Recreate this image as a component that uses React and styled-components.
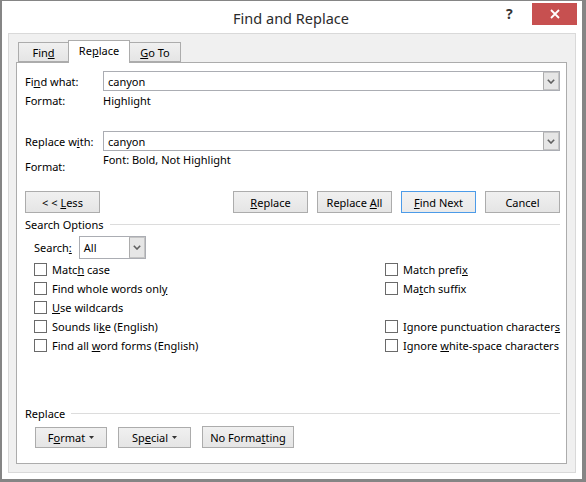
import React from "react";
import styled, { createGlobalStyle } from "styled-components";

const GlobalStyle = createGlobalStyle`
  html, body {
    margin: 0;
    padding: 0;
    background: #ffffff;
  }
  body {
    font-family: "Noto Sans", "Open Sans", sans-serif;
    font-size: 11px;
    color: #000;
  }
`;

const Window = styled.div`
  width: 586px;
  height: 482px;
  box-sizing: border-box;
  border-style: solid;
  border-color: #858585;
  border-width: 1px 4px 3px 2px;
  background: #ffffff;
  display: flex;
  flex-direction: column;
`;

const TitleBar = styled.div`
  height: 32px;
  flex-shrink: 0;
  display: grid;
  grid-template-columns: 1fr auto 1fr;
  align-items: start;
`;

const Title = styled.div`
  grid-column: 2;
  font-size: 14.5px;
  line-height: 34px;
  color: #2b2b2b;
  padding-right: 2px;
`;

const TitleControls = styled.div`
  grid-column: 3;
  justify-self: end;
  display: flex;
  align-items: center;
  margin-right: 5px;
`;

const Help = styled.span`
  font-size: 14px;
  font-weight: bold;
  color: #333;
  width: 20px;
  margin-right: 6px;
  line-height: 26px;
`;

const CloseButton = styled.div`
  width: 45px;
  height: 22px;
  background: #c75050;
  display: flex;
  align-items: center;
  justify-content: center;
`;

const Body = styled.div`
  flex: 1;
  margin: 0 6px 6px 6px;
  background: #f0f0f0;
  border: 1px solid #d9d9d9;
  padding: 6px 8px 8px 7px;
  display: flex;
  flex-direction: column;
`;

const TabRow = styled.div`
  display: flex;
  align-items: flex-end;
  margin-left: 2px;
  height: 22px;
  position: relative;
  z-index: 1;
`;

const Tab = styled.div`
  box-sizing: border-box;
  width: ${(p) => p.$width}px;
  height: ${(p) => (p.$active ? 23 : 20)}px;
  margin-bottom: ${(p) => (p.$active ? -1 : 0)}px;
  border: 1px solid #acacac;
  border-bottom: ${(p) => (p.$active ? "none" : "1px solid #acacac")};
  margin-left: ${(p) => (p.$first ? 0 : -1)}px;
  background: ${(p) =>
    p.$active ? "#ffffff" : "linear-gradient(#f0f0f0, #e5e5e5)"};
  display: flex;
  align-items: center;
  justify-content: center;
  padding-bottom: ${(p) => (p.$active ? 3 : 0)}px;
  font-size: 11px;
`;

const Panel = styled.div`
  flex: 1;
  background: #ffffff;
  border: 1px solid #acacac;
  padding: 8px 6px 0 8px;
  display: flex;
  flex-direction: column;
`;

const Key = styled.u`
  text-decoration: underline;
  text-underline-offset: 1px;
`;

const FieldRow = styled.div`
  display: flex;
  align-items: center;
  height: 20px;
  margin-top: ${(p) => p.$top || 0}px;
`;

const Label = styled.div`
  width: 78px;
  flex-shrink: 0;
  margin-top: ${(p) => p.$offset || 0}px;
`;

const Combo = styled.div`
  box-sizing: border-box;
  height: ${(p) => p.$height || 20}px;
  width: ${(p) => (p.$width ? p.$width + "px" : "auto")};
  flex: ${(p) => (p.$width ? "none" : 1)};
  border: 1px solid #abadb3;
  display: flex;
  align-items: stretch;
  background: #fff;
`;

const ComboText = styled.div`
  flex: 1;
  padding-left: 4px;
  display: flex;
  align-items: center;
`;

const ComboButton = styled.div`
  width: 16px;
  box-sizing: border-box;
  background: #e6e6e6;
  border: 1px solid #c5c5c5;
  border-left-color: #acacac;
  display: flex;
  align-items: center;
  justify-content: center;
`;

const FormatRow = styled.div`
  display: flex;
  align-items: flex-start;
  margin-top: ${(p) => p.$top || 0}px;
  line-height: 16px;
`;

const ButtonRow = styled.div`
  display: flex;
  align-items: center;
  gap: ${(p) => p.$gap || 9}px;
  margin-top: ${(p) => p.$top || 0}px;
  padding-left: ${(p) => p.$indent || 0}px;
`;

const Button = styled.button`
  font: inherit;
  color: #000;
  box-sizing: border-box;
  width: ${(p) => p.$width}px;
  height: ${(p) => p.$height || 22}px;
  margin-right: ${(p) => (p.$push ? "auto" : "0")};
  border: 1px solid ${(p) => (p.$primary ? "#4c9be8" : "#acacac")};
  background: ${(p) =>
    p.$primary
      ? "linear-gradient(#f2f2f2, #eaeaea)"
      : "linear-gradient(#f0f0f0, #e5e5e5)"};
  padding: 0;
  display: flex;
  align-items: center;
  justify-content: center;
  gap: 4px;
  white-space: nowrap;
`;

const GroupHeader = styled.div`
  display: flex;
  align-items: center;
  height: 16px;
  margin-top: ${(p) => p.$top || 0}px;

  &::after {
    content: "";
    flex: 1;
    height: 1px;
    background: #dcdcdc;
    margin-left: 6px;
  }
`;

const SearchRow = styled.div`
  display: flex;
  align-items: center;
  margin-top: 4px;
  padding-left: 9px;
  gap: 7px;
`;

const OptionGrid = styled.div`
  display: grid;
  grid-template-columns: 351px 1fr;
  grid-auto-rows: 19px;
  margin-top: 1px;
  padding-left: 9px;
`;

const Option = styled.div`
  display: flex;
  align-items: center;
  gap: 5px;
  white-space: nowrap;
  grid-column: ${(p) => p.$col};
  grid-row: ${(p) => p.$row};
`;

const Box = styled.span`
  width: 13px;
  height: 13px;
  box-sizing: border-box;
  border: 1px solid #6a6a6a;
  background: #fff;
  flex-shrink: 0;
`;

const Caret = () => (
  <svg width="5" height="3" viewBox="0 0 5 3">
    <path d="M0 0 L2.5 3 L5 0 Z" fill="#333" />
  </svg>
);

const Chevron = () => (
  <svg width="8" height="5" viewBox="0 0 8 5">
    <path
      d="M0.8 0.8 L4 4 L7.2 0.8"
      fill="none"
      stroke="#606060"
      strokeWidth="1.6"
    />
  </svg>
);

const CloseIcon = () => (
  <svg width="10" height="10" viewBox="0 0 10 10">
    <path d="M1 1 L9 9 M9 1 L1 9" stroke="#fff" strokeWidth="1.8" />
  </svg>
);

const options = [
  { col: 1, row: 1, label: <>Matc<Key>h</Key> case</> },
  { col: 1, row: 2, label: <>Find whole words onl<Key>y</Key></> },
  { col: 1, row: 3, label: <><Key>U</Key>se wildcards</> },
  { col: 1, row: 4, label: <>Sounds li<Key>k</Key>e (English)</> },
  { col: 1, row: 5, label: <>Find all <Key>w</Key>ord forms (English)</> },
  { col: 2, row: 1, label: <>Match prefi<Key>x</Key></> },
  { col: 2, row: 2, label: <>Ma<Key>t</Key>ch suffix</> },
  { col: 2, row: 4, label: <>Ignore punctuation character<Key>s</Key></> },
  { col: 2, row: 5, label: <>Ignore <Key>w</Key>hite-space characters</> },
];

export default function App() {
  return (
    <>
      <GlobalStyle />
      <Window>
        <TitleBar>
          <Title>Find and Replace</Title>
          <TitleControls>
            <Help>?</Help>
            <CloseButton>
              <CloseIcon />
            </CloseButton>
          </TitleControls>
        </TitleBar>
        <Body>
          <TabRow>
            <Tab $width={51} $first>
              <span>
                Fin<Key>d</Key>
              </span>
            </Tab>
            <Tab $width={62} $active>
              <span>
                Re<Key>p</Key>lace
              </span>
            </Tab>
            <Tab $width={52}>
              <span>
                <Key>G</Key>o To
              </span>
            </Tab>
          </TabRow>
          <Panel>
            <FieldRow>
              <Label>
                Fi<Key>n</Key>d what:
              </Label>
              <Combo>
                <ComboText>canyon</ComboText>
                <ComboButton>
                  <Chevron />
                </ComboButton>
              </Combo>
            </FieldRow>
            <FormatRow $top={2}>
              <Label>Format:</Label>
              <div>Highlight</div>
            </FormatRow>
            <FieldRow $top={22}>
              <Label>
                Replace w<Key>i</Key>th:
              </Label>
              <Combo>
                <ComboText>canyon</ComboText>
                <ComboButton>
                  <Chevron />
                </ComboButton>
              </Combo>
            </FieldRow>
            <FormatRow $top={1}>
              <Label $offset={7}>Format:</Label>
              <div>Font: Bold, Not Highlight</div>
            </FormatRow>
            <ButtonRow $top={16}>
              <Button $width={75} $push>
                <span>
                  &lt; &lt; <Key>L</Key>ess
                </span>
              </Button>
              <Button $width={75}>
                <span>
                  <Key>R</Key>eplace
                </span>
              </Button>
              <Button $width={75}>
                <span>
                  Replace <Key>A</Key>ll
                </span>
              </Button>
              <Button $width={75} $primary>
                <span>
                  <Key>F</Key>ind Next
                </span>
              </Button>
              <Button $width={75}>
                <span>Cancel</span>
              </Button>
            </ButtonRow>
            <GroupHeader $top={3}>Search Options</GroupHeader>
            <SearchRow>
              <span>
                Search<Key>:</Key>
              </span>
              <Combo $width={67} $height={23}>
                <ComboText>All</ComboText>
                <ComboButton>
                  <Chevron />
                </ComboButton>
              </Combo>
            </SearchRow>
            <OptionGrid>
              {options.map((o, i) => (
                <Option key={i} $col={o.col} $row={o.row}>
                  <Box />
                  <span>{o.label}</span>
                </Option>
              ))}
            </OptionGrid>
            <GroupHeader $top={50}>Replace</GroupHeader>
            <ButtonRow $top={5} $indent={10} $gap={11}>
              <Button $width={72} $height={21}>
                <span>
                  F<Key>o</Key>rmat
                </span>
                <Caret />
              </Button>
              <Button $width={73} $height={21}>
                <span>
                  Sp<Key>e</Key>cial
                </span>
                <Caret />
              </Button>
              <Button $width={92} $height={22}>
                <span>
                  No Forma<Key>t</Key>ting
                </span>
              </Button>
            </ButtonRow>
          </Panel>
        </Body>
      </Window>
    </>
  );
}
